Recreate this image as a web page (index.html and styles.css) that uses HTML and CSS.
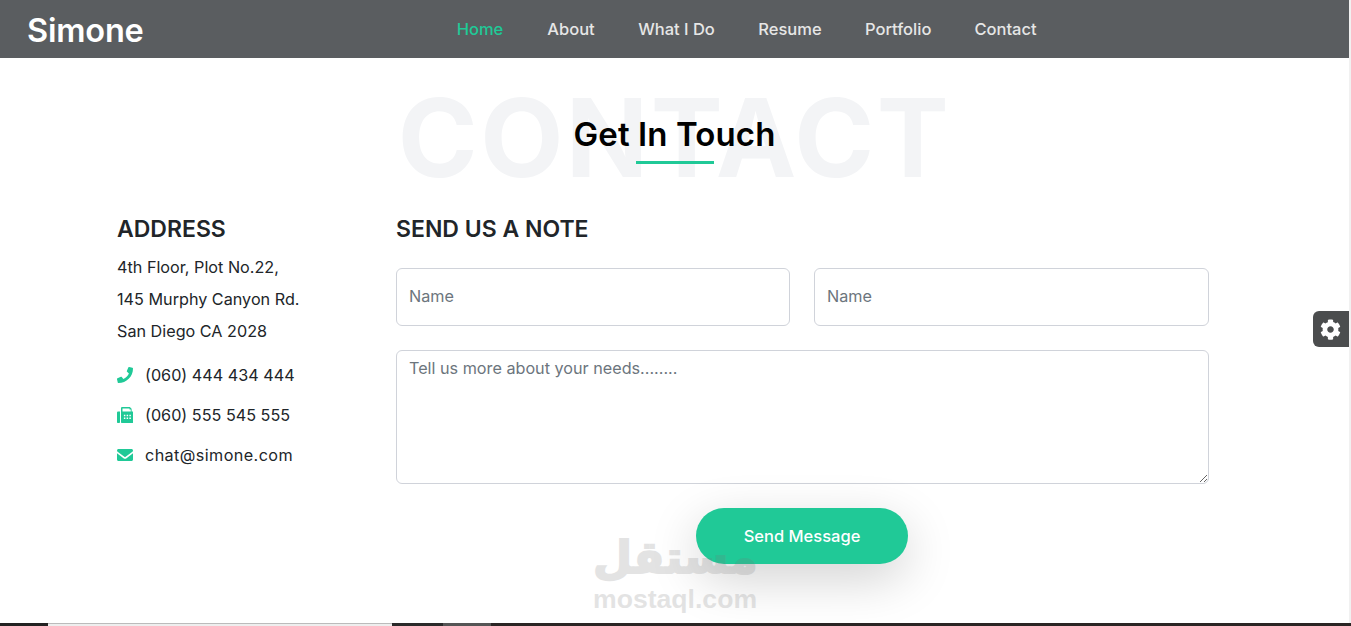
FILE: index.html
```html
<!DOCTYPE html>
<html lang="en">
  <head>
    <meta charset="UTF-8" />
    <meta name="viewport" content="width=device-width, initial-scale=1.0" />
    <title>Simone</title>
    <link rel="stylesheet" href="styles.css">
  </head>
  <body>
    <div class="page">
      <header class="navbar">
        <a class="logo" href="#">Simone</a>
        <nav class="nav-links">
          <a class="active" href="#">Home</a>
          <a href="#">About</a>
          <a href="#">What I Do</a>
          <a href="#">Resume</a>
          <a href="#">Portfolio</a>
          <a href="#">Contact</a>
        </nav>
      </header>

      <section class="contact">
        <div class="heading">
          <div class="heading-back">CONTACT</div>
          <h2 class="heading-title">Get In Touch</h2>
          <span class="heading-line"></span>
        </div>

        <div class="contact-row">
          <div class="address">
            <h3>ADDRESS</h3>
            <p>4th Floor, Plot No.22,</p>
            <p>145 Murphy Canyon Rd.</p>
            <p class="last-line">San Diego CA 2028</p>
            <div class="info">
              <svg viewBox="0 0 512 512"><path d="M493 24 389 0c-11-3-23 3-27 14l-48 112c-4 10-1 21 7 28l60 50c-36 77-99 141-178 178l-50-60c-7-8-18-11-28-7L14 363C3 367-3 379 0 390l24 104c2 11 12 18 23 18 256 0 465-207 465-465 0-11-8-21-19-23z"/></svg>
              <span>(060) 444 434 444</span>
            </div>
            <div class="info">
              <svg viewBox="0 0 512 512"><path d="M128 144V40c0-22 18-40 40-40h224c13 0 25 5 34 14l28 28c9 9 14 21 14 34v68h24c22 0 40 18 40 40v288c0 22-18 40-40 40H160c-18 0-32-14-32-32V144zm48 0h264V80h-40V48H176zM40 144h56v336c0 18-14 32-32 32H32c-18 0-32-14-32-32V184c0-22 18-40 40-40zm180 104v48h48v-48zm88 0v48h48v-48zm88 0v48h48v-48zm-176 88v48h48v-48zm88 0v48h48v-48zm88 0v48h48v-48z" fill-rule="evenodd"/></svg>
              <span>(060) 555 545 555</span>
            </div>
            <div class="info info-mail">
              <svg viewBox="0 0 512 512"><path d="M48 64C22 64 0 86 0 112c0 15 7 29 19 38l218 164c11 8 27 8 38 0l218-164c12-9 19-23 19-38 0-26-22-48-48-48H48zM0 202v198c0 26 22 48 48 48h416c26 0 48-22 48-48V202L294 366c-23 17-53 17-76 0L0 202z"/></svg>
              <span>chat@simone.com</span>
            </div>
          </div>

          <form class="note">
            <h3>SEND US A NOTE</h3>
            <div class="note-names">
              <input type="text" placeholder="Name" />
              <input type="text" placeholder="Name" />
            </div>
            <textarea placeholder="Tell us more about your needs........"></textarea>
            <div class="note-send">
              <button type="button">Send Message</button>
            </div>
          </form>
        </div>
      </section>

      <div class="page-strip">
        <span class="strip-a"></span>
        <span class="strip-b"></span>
        <span class="strip-c"></span>
        <span class="strip-d"></span>
        <span class="strip-e"></span>
      </div>

      <div class="gear-tab">
        <svg viewBox="0 0 512 512"><path fill-rule="evenodd" d="M487 316l-42-25c4-23 4-47 0-70l42-25c5-3 7-9 5-14-11-35-30-67-54-93-4-4-10-5-15-2l-42 24c-18-15-38-27-61-35V28c0-6-4-11-9-12-37-8-74-8-110 0-5 1-9 6-9 12v49c-22 8-43 20-61 35L89 88c-5-3-11-2-15 2-24 26-43 58-54 93-2 5 0 11 5 14l42 25c-4 23-4 47 0 70l-42 25c-5 3-7 9-5 14 11 35 30 67 54 93 4 4 10 5 15 2l42-24c18 15 38 27 61 35v49c0 6 4 11 9 12 37 8 74 8 110 0 5-1 9-6 9-12v-49c22-8 43-20 61-35l42 24c5 3 11 2 15-2 24-26 43-58 54-93 2-5 0-11-5-14zM256 336c-44 0-80-36-80-80s36-80 80-80 80 36 80 80-36 80-80 80z"/></svg>
      </div>

      <div class="watermark">
        <div class="watermark-ar">مستقل</div>
        <div class="watermark-en">mostaql.com</div>
      </div>
    </div>
  </body>
</html>
```

FILE: styles.css
```css
* {
  box-sizing: border-box;
}
html,
body {
  margin: 0;
  height: 626px;
  overflow: hidden;
}
body {
  font-family: "Inter", "Liberation Sans", sans-serif;
  color: #212529;
  background: #fff;
}
.page {
  position: relative;
  height: 626px;
  display: flex;
  flex-direction: column;
  border-right: 2px solid #f1f1f1;
}

/* navbar */
.navbar {
  flex: none;
  height: 58px;
  padding-left: 27px;
  background: #5a5d60;
  display: flex;
  align-items: center;
}
.logo {
  width: 115px;
  margin-top: 3px;
  color: #fff;
  font-size: 32.5px;
  line-height: 42px;
  font-weight: 600;
  letter-spacing: -0.2px;
  text-decoration: none;
}
.nav-links {
  display: grid;
  grid-template-columns: 48px 48px 77px 64px 65px 65px;
  column-gap: 43px;
  margin-left: 314px;
}
.nav-links a {
  color: #e6e6e6;
  font-size: 16.5px;
  font-weight: 500;
  text-align: center;
  white-space: nowrap;
  text-decoration: none;
}
.nav-links a.active {
  color: #20c997;
}

/* heading */
.contact {
  flex: 1;
}
.heading {
  position: relative;
  height: 157px;
  display: flex;
  flex-direction: column;
  align-items: center;
  padding-top: 56px;
}
.heading-back {
  position: absolute;
  top: 15px;
  left: 0;
  right: 0;
  text-align: center;
  color: #f3f4f6;
  font-size: 108px;
  line-height: 130px;
  font-weight: 700;
  letter-spacing: 2.5px;
  white-space: nowrap;
}
.heading-title {
  position: relative;
  margin: 0;
  color: #000;
  font-size: 33px;
  line-height: 40px;
  font-weight: 600;
  letter-spacing: 0.1px;
}
.heading-line {
  position: relative;
  width: 78px;
  height: 3px;
  margin-top: 7px;
  background: #20c997;
}

/* address + form */
.contact-row {
  display: flex;
  padding: 0 140px 0 117px;
}
.address {
  flex: none;
  width: 279px;
  font-size: 16.2px;
}
.address h3,
.note h3 {
  margin: 0;
  font-size: 23px;
  line-height: 28px;
  font-weight: 600;
}
.address p {
  margin: 0;
  line-height: 32px;
}
.address h3 {
  margin-bottom: 8px;
}
.address .last-line {
  margin-bottom: 8px;
}
.info {
  display: flex;
  align-items: center;
  height: 40px;
}
.info svg {
  flex: none;
  width: 16px;
  height: 16px;
  margin-right: 12px;
  fill: #20c997;
}
.info-mail span {
  letter-spacing: 0.4px;
}
.note {
  flex: 1;
}
.note h3 {
  margin-bottom: 25px;
}
.note-names {
  display: grid;
  grid-template-columns: 394px 1fr;
  column-gap: 24px;
  margin-bottom: 24px;
}
.note input,
.note textarea {
  display: block;
  width: 100%;
  min-width: 0;
  border: 1px solid #d0d3da;
  border-radius: 6px;
  padding: 0 12px;
  font-family: inherit;
  font-size: 16.2px;
  color: #495057;
  background: #fff;
}
.note input {
  height: 58px;
  padding-bottom: 2px;
}
.note textarea {
  height: 134px;
  padding-top: 7px;
  line-height: 20px;
}
.note ::placeholder {
  color: #6c757d;
  opacity: 1;
}
.note-send {
  display: flex;
  justify-content: center;
  margin-top: 24px;
  padding-right: 1px;
}
.note-send button {
  width: 212px;
  height: 56px;
  padding-bottom: 2px;
  border: none;
  border-radius: 28px;
  background: #20c997;
  color: #fff;
  font-family: inherit;
  font-size: 16.5px;
  font-weight: 500;
  box-shadow: 0 15px 50px rgba(0, 0, 0, 0.18);
}

/* bottom of the next section */
.page-strip {
  flex: none;
  height: 3px;
  margin-right: -2px;
  display: flex;
  background: #2a2524;
}
.strip-a {
  width: 48px;
  background: #222;
}
.strip-b {
  width: 344px;
  background: #eee;
  border-top: 1px solid #bbb;
}
.strip-c {
  width: 51px;
  background: #2a2a2a;
}
.strip-d {
  width: 48px;
  background: #555;
}
.strip-e {
  flex: 1;
}

/* over the content */
.gear-tab {
  position: absolute;
  top: 311px;
  right: 0;
  width: 36px;
  height: 36px;
  padding-right: 2px;
  background: #4b4d4e;
  border-radius: 6px 0 0 6px;
  display: flex;
  align-items: center;
  justify-content: center;
}
.gear-tab svg {
  width: 21px;
  height: 21px;
  fill: #fff;
}
.watermark {
  position: absolute;
  left: 593px;
  top: 530px;
  width: 164px;
  text-align: center;
  color: #787878;
  opacity: 0.2;
  font-weight: 700;
  pointer-events: none;
}
.watermark-ar {
  font-family: "DejaVu Sans", sans-serif;
  font-size: 45px;
  line-height: 56px;
  white-space: nowrap;
  -webkit-text-stroke: 2px #787878;
}
.watermark-en {
  font-family: "Liberation Sans", sans-serif;
  font-size: 26.6px;
  line-height: 26px;
  white-space: nowrap;
}
```
